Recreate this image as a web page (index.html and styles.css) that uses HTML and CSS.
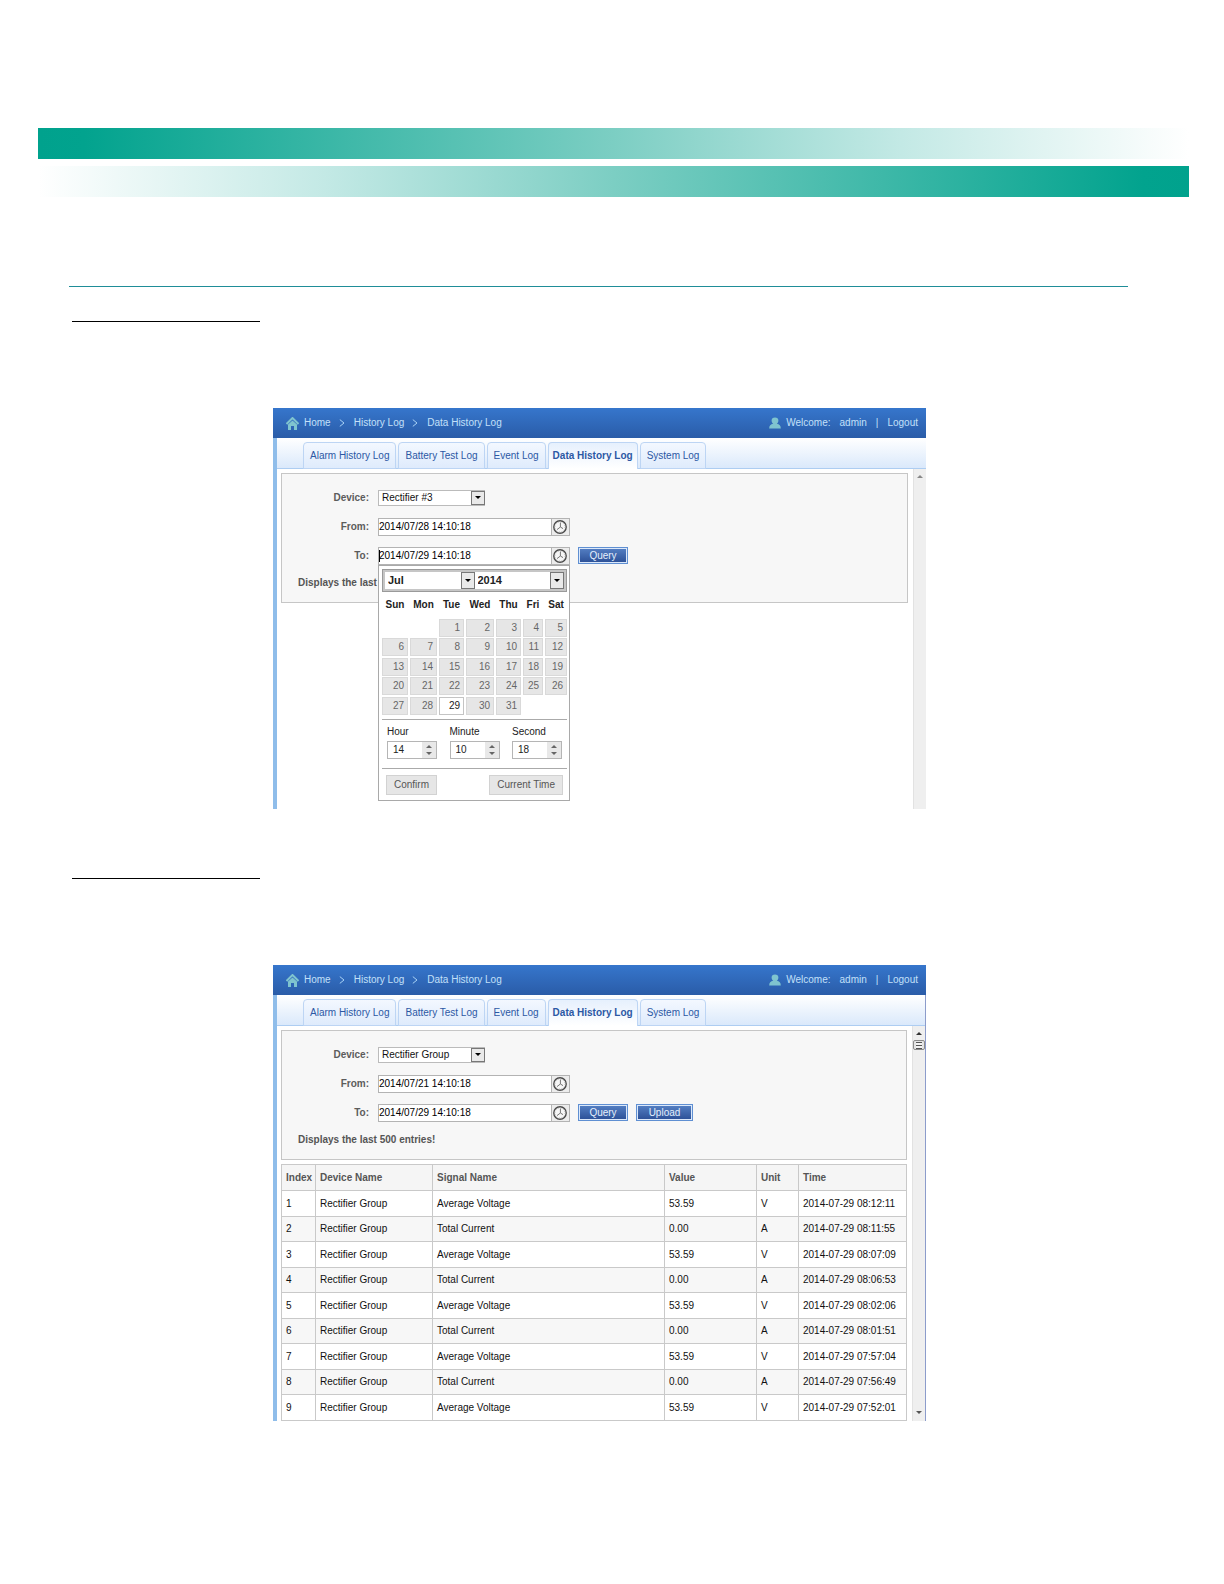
FILE: index.html
```
<!DOCTYPE html>
<html lang="en">
<head>
  <meta charset="utf-8">
  <title>Data History Log</title>
  <link rel="stylesheet" href="styles.css">
</head>
<body>
  <!-- shared icons -->
  <svg class="sprite" aria-hidden="true">
    <symbol id="icon-home" viewBox="0 0 13 13">
      <path d="M0.5 7 L6.5 1 L12.5 7" fill="none" stroke="#7fc4cf" stroke-width="2"/>
      <path d="M2 7.6 L6.5 3.4 L11 7.6 V13 H8 V9 H5 V13 H2 Z" fill="#7fc4cf"/>
    </symbol>
    <symbol id="icon-user" viewBox="0 0 12 12">
      <path d="M6 0.5 C8.2 0.5 9.4 1.8 9.4 3.6 C9.4 5 8.6 6.2 7.8 6.8 C10.4 7.2 11.8 8.6 11.8 11.5 H0.2 C0.2 8.6 1.6 7.2 4.2 6.8 C3.4 6.2 2.6 5 2.6 3.6 C2.6 1.8 3.8 0.5 6 0.5 Z" fill="#7fc4cf"/>
    </symbol>
    <symbol id="icon-next" viewBox="0 0 6 8">
      <path d="M0.8 0.6 L5 4 L0.8 7.4" fill="none" stroke="#a9d2f5" stroke-width="1"/>
    </symbol>
    <symbol id="icon-clock" viewBox="0 0 16 16">
      <circle cx="8" cy="8" r="6.2" fill="#f6f6f6" stroke="#4a4a4a" stroke-width="1.4"/>
      <circle cx="8" cy="8" r="5" fill="none" stroke="#b5b5b5" stroke-width="1" stroke-dasharray="1 1.6"/>
      <path d="M8.4 3.6 V8 L5 10.6 M8.4 8 L11 9.6" fill="none" stroke="#777" stroke-width="1"/>
    </symbol>
  </svg>

  <header class="bands">
    <div class="band band-left"></div>
    <div class="band band-right"></div>
  </header>
  <hr class="rule">

  <section class="step">
    <hr class="underline">
    <div class="panel">
      <div class="topbar">
        <svg class="home-icon"><use href="#icon-home"/></svg>
        <nav class="crumbs">
          <a href="#">Home</a>
          <svg class="next-icon"><use href="#icon-next"/></svg>
          <a href="#">History Log</a>
          <svg class="next-icon"><use href="#icon-next"/></svg>
          <a href="#">Data History Log</a>
        </nav>
        <div class="account">
          <svg class="user-icon"><use href="#icon-user"/></svg>
          <span>Welcome:</span>
          <span>admin</span>
          <span>|</span>
          <a href="#">Logout</a>
        </div>
      </div>
      <nav class="tabs">
        <a class="tab" href="#">Alarm History Log</a>
        <a class="tab" href="#">Battery Test Log</a>
        <a class="tab" href="#">Event Log</a>
        <a class="tab active" href="#">Data History Log</a>
        <a class="tab" href="#">System Log</a>
      </nav>
      <div class="view">
        <div class="content content-tall">
          <form class="filter">
            <div class="row">
              <label for="device1">Device:</label>
              <div class="select select-device">
                <select id="device1"><option>Rectifier #3</option></select>
                <span class="arrow"></span>
              </div>
            </div>
            <div class="row">
              <label for="from1">From:</label>
              <div class="date">
                <input id="from1" type="text" value="2014/07/28 14:10:18">
                <button type="button" class="clock" aria-label="Pick start"><svg><use href="#icon-clock"/></svg></button>
              </div>
            </div>
            <div class="row">
              <label for="to1">To:</label>
              <div class="date">
                <input id="to1" class="caret" type="text" value="2014/07/29 14:10:18">
                <button type="button" class="clock" aria-label="Pick end"><svg><use href="#icon-clock"/></svg></button>

                <div class="picker">
                  <div class="picker-bar">
                    <div class="select">
                      <select aria-label="Month"><option>Jul</option></select>
                      <span class="arrow"></span>
                    </div>
                    <div class="select">
                      <select aria-label="Year"><option>2014</option></select>
                      <span class="arrow"></span>
                    </div>
                  </div>
                  <table class="days">
                    <colgroup>
                      <col class="d-sun"><col class="d-mon"><col class="d-tue"><col class="d-wed"><col class="d-thu"><col class="d-fri"><col class="d-sat">
                    </colgroup>
                    <thead>
                      <tr><th>Sun</th><th>Mon</th><th>Tue</th><th>Wed</th><th>Thu</th><th>Fri</th><th>Sat</th></tr>
                    </thead>
                    <tbody>
                      <tr><td></td><td></td><td><button type="button">1</button></td><td><button type="button">2</button></td><td><button type="button">3</button></td><td><button type="button">4</button></td><td><button type="button">5</button></td></tr>
                      <tr><td><button type="button">6</button></td><td><button type="button">7</button></td><td><button type="button">8</button></td><td><button type="button">9</button></td><td><button type="button">10</button></td><td><button type="button">11</button></td><td><button type="button">12</button></td></tr>
                      <tr><td><button type="button">13</button></td><td><button type="button">14</button></td><td><button type="button">15</button></td><td><button type="button">16</button></td><td><button type="button">17</button></td><td><button type="button">18</button></td><td><button type="button">19</button></td></tr>
                      <tr><td><button type="button">20</button></td><td><button type="button">21</button></td><td><button type="button">22</button></td><td><button type="button">23</button></td><td><button type="button">24</button></td><td><button type="button">25</button></td><td><button type="button">26</button></td></tr>
                      <tr><td><button type="button">27</button></td><td><button type="button">28</button></td><td><button type="button" class="today">29</button></td><td><button type="button">30</button></td><td><button type="button">31</button></td><td></td><td></td></tr>
                    </tbody>
                  </table>
                  <div class="time">
                    <div class="unit">
                      <label for="hour">Hour</label>
                      <div class="spin"><input id="hour" type="number" value="14"><span class="spin-arrows"></span></div>
                    </div>
                    <div class="unit">
                      <label for="minute">Minute</label>
                      <div class="spin"><input id="minute" type="number" value="10"><span class="spin-arrows"></span></div>
                    </div>
                    <div class="unit">
                      <label for="second">Second</label>
                      <div class="spin"><input id="second" type="number" value="18"><span class="spin-arrows"></span></div>
                    </div>
                  </div>
                  <div class="picker-actions">
                    <button type="button">Confirm</button>
                    <button type="button">Current Time</button>
                  </div>
                </div>
              </div>
              <button type="button" class="btn">Query</button>
            </div>
            <p class="note">Displays the last 500 entries!</p>
          </form>
        </div>
        <div class="scrollbar disabled">
          <span class="up"></span>
        </div>
      </div>
    </div>
  </section>

  <section class="step">
    <hr class="underline">
    <div class="panel panel-edge">
      <div class="topbar">
        <svg class="home-icon"><use href="#icon-home"/></svg>
        <nav class="crumbs">
          <a href="#">Home</a>
          <svg class="next-icon"><use href="#icon-next"/></svg>
          <a href="#">History Log</a>
          <svg class="next-icon"><use href="#icon-next"/></svg>
          <a href="#">Data History Log</a>
        </nav>
        <div class="account">
          <svg class="user-icon"><use href="#icon-user"/></svg>
          <span>Welcome:</span>
          <span>admin</span>
          <span>|</span>
          <a href="#">Logout</a>
        </div>
      </div>
      <nav class="tabs">
        <a class="tab" href="#">Alarm History Log</a>
        <a class="tab" href="#">Battery Test Log</a>
        <a class="tab" href="#">Event Log</a>
        <a class="tab active" href="#">Data History Log</a>
        <a class="tab" href="#">System Log</a>
      </nav>
      <div class="view">
        <div class="content">
          <form class="filter">
            <div class="row">
              <label for="device2">Device:</label>
              <div class="select select-device">
                <select id="device2"><option>Rectifier Group</option></select>
                <span class="arrow"></span>
              </div>
            </div>
            <div class="row">
              <label for="from2">From:</label>
              <div class="date">
                <input id="from2" type="text" value="2014/07/21 14:10:18">
                <button type="button" class="clock" aria-label="Pick start"><svg><use href="#icon-clock"/></svg></button>
              </div>
            </div>
            <div class="row">
              <label for="to2">To:</label>
              <div class="date">
                <input id="to2" type="text" value="2014/07/29 14:10:18">
                <button type="button" class="clock" aria-label="Pick end"><svg><use href="#icon-clock"/></svg></button>
              </div>
              <button type="button" class="btn">Query</button>
              <button type="button" class="btn btn-wide">Upload</button>
            </div>
            <p class="note">Displays the last 500 entries!</p>
          </form>
          <table class="log">
            <colgroup>
              <col class="c-index"><col class="c-device"><col><col class="c-value"><col class="c-unit"><col class="c-time">
            </colgroup>
            <thead>
              <tr><th>Index</th><th>Device Name</th><th>Signal Name</th><th>Value</th><th>Unit</th><th>Time</th></tr>
            </thead>
            <tbody>
              <tr><td>1</td><td>Rectifier Group</td><td>Average Voltage</td><td>53.59</td><td>V</td><td>2014-07-29 08:12:11</td></tr>
              <tr><td>2</td><td>Rectifier Group</td><td>Total Current</td><td>0.00</td><td>A</td><td>2014-07-29 08:11:55</td></tr>
              <tr><td>3</td><td>Rectifier Group</td><td>Average Voltage</td><td>53.59</td><td>V</td><td>2014-07-29 08:07:09</td></tr>
              <tr><td>4</td><td>Rectifier Group</td><td>Total Current</td><td>0.00</td><td>A</td><td>2014-07-29 08:06:53</td></tr>
              <tr><td>5</td><td>Rectifier Group</td><td>Average Voltage</td><td>53.59</td><td>V</td><td>2014-07-29 08:02:06</td></tr>
              <tr><td>6</td><td>Rectifier Group</td><td>Total Current</td><td>0.00</td><td>A</td><td>2014-07-29 08:01:51</td></tr>
              <tr><td>7</td><td>Rectifier Group</td><td>Average Voltage</td><td>53.59</td><td>V</td><td>2014-07-29 07:57:04</td></tr>
              <tr><td>8</td><td>Rectifier Group</td><td>Total Current</td><td>0.00</td><td>A</td><td>2014-07-29 07:56:49</td></tr>
              <tr><td>9</td><td>Rectifier Group</td><td>Average Voltage</td><td>53.59</td><td>V</td><td>2014-07-29 07:52:01</td></tr>
            </tbody>
          </table>
        </div>
        <div class="scrollbar">
          <span class="up"></span>
          <span class="thumb"></span>
          <span class="down"></span>
        </div>
      </div>
    </div>
  </section>
</body>
</html>
```
FILE: styles.css
```
* {
  box-sizing: border-box;
}
body {
  margin: 0;
  padding: 128px 0 160px;
  background: #fff;
  font-family: "Liberation Sans", Arial, sans-serif;
  font-size: 10px;
  line-height: 12px;
  color: #222;
}
a {
  color: inherit;
  text-decoration: none;
}
hr, p {
  margin: 0;
  border: 0;
}
input, select, button {
  margin: 0;
  padding: 0;
  border: 0;
  border-radius: 0;
  background: none;
  font: inherit;
  color: inherit;
  appearance: none;
}
.sprite {
  display: none;
}

/* page header */
.bands {
  display: flex;
  flex-direction: column;
  gap: 7px;
  margin: 0 35px 0 38px;
}
.band {
  height: 31px;
}
.band-left {
  background: linear-gradient(to right, #00a28d, #02a38e 4%, #7ccec3 50%, #c3e9e5 75%, #fff);
}
.band-right {
  background: linear-gradient(to left, #00a28d, #02a38e 4%, #7ccec3 50%, #c3e9e5 75%, #fff);
}
.rule {
  height: 1px;
  margin: 89px 96px 0 69px;
  background: #1f8d98;
}
.step {
  margin: 0 298px 0 273px;
  padding-top: 34px;
}
.step + .step {
  padding-top: 69px;
}
.underline {
  width: 188px;
  height: 1px;
  margin: 0 0 86px -201px;
  background: #000;
}

/* panel */
.topbar {
  display: flex;
  align-items: center;
  height: 30px;
  padding: 0 8px 0 13px;
  background: linear-gradient(#3676cc, #2a5ca8);
  color: #c3e0f9;
}
.home-icon {
  width: 13px;
  height: 13px;
  margin-right: 5px;
}
.crumbs {
  display: flex;
  align-items: center;
  flex: 1;
}
.next-icon {
  width: 6px;
  height: 8px;
  margin: 0 9px 0 8px;
}
.account {
  display: flex;
  align-items: center;
  gap: 9px;
}
.user-icon {
  width: 12px;
  height: 12px;
  margin-right: -4px;
}
.tabs {
  display: flex;
  align-items: flex-end;
  gap: 2px;
  height: 31px;
  padding-left: 26px;
  border-left: 4px solid #8fbdea;
  background: linear-gradient(#fff, #d9e8fb);
  box-shadow: inset 0 -1px #adcdf2;
}
.tab {
  height: 27px;
  padding: 0 6px;
  border: 1px solid #bdd5f4;
  border-radius: 4px 4px 0 0;
  background: linear-gradient(#f3f8ff, #dfebfc);
  line-height: 25px;
  color: #2c58a4;
  white-space: nowrap;
}
.tab.active {
  padding: 0 4px;
  border-bottom: 0;
  background: linear-gradient(#e6f0fd, #fff);
  font-weight: bold;
}
.view {
  display: flex;
  border-left: 4px solid #8fbdea;
}
.panel-edge .tabs,
.panel-edge .view {
  border-right: 1px solid #8c9ccb;
}
.content {
  flex: 1;
  padding: 4px 5px 0 4px;
}
.content-tall {
  min-height: 340px;
}
.scrollbar {
  display: flex;
  flex-direction: column;
  align-items: center;
  width: 13px;
  padding-top: 6px;
  border-left: 1px solid #e2e2e2;
  background: #efefef;
}
.up {
  border: 3px solid transparent;
  border-top: 0;
  border-bottom-color: #333;
}
.down {
  margin: auto 0 7px;
  border: 3px solid transparent;
  border-bottom: 0;
  border-top-color: #555;
}
.disabled .up {
  border-bottom-color: #888;
}
.thumb {
  width: 12px;
  height: 10px;
  margin-top: 5px;
  border: 1px solid #8c8c8c;
  border-radius: 2px;
  background: repeating-linear-gradient(#555 0 1px, #f3f3f3 1px 3px) center / 6px 7px no-repeat #e4e4e4;
}

/* filter form */
.filter {
  padding: 9px 16px 6px 0;
  border: 1px solid #c6c6c6;
  background: #f7f7f7;
}
.row {
  display: flex;
  align-items: center;
  height: 29px;
}
.row > label {
  width: 87px;
  margin-right: 9px;
  text-align: right;
  font-weight: bold;
  color: #5c5c5c;
}
.note {
  padding-left: 16px;
  font-weight: bold;
  line-height: 26px;
  color: #555;
}
.select {
  display: grid;
  grid-template-columns: 1fr 14px;
  background: #fff;
}
.select select {
  grid-area: 1 / 1 / 2 / 3;
  width: 100%;
  padding-left: 3px;
}
.arrow {
  grid-area: 1 / 2;
  display: flex;
  align-items: center;
  justify-content: center;
  border: 1px solid #777;
  background: #e9e9e9;
  pointer-events: none;
}
.arrow::after {
  content: "";
  border: 3px solid transparent;
  border-bottom: 0;
  border-top-color: #000;
}
.select-device {
  width: 107px;
  height: 16px;
  border: 1px solid #bbb;
  border-right: 0;
  color: #111;
}
.date {
  position: relative;
  display: flex;
  width: 192px;
  height: 18px;
  border: 1px solid #b3b3b3;
  background: #fff;
  color: #000;
}
.date > input {
  flex: 1;
  min-width: 0;
}
.date > .caret {
  background: linear-gradient(#000, #000) left center / 1px 12px no-repeat;
}
.clock {
  width: 18px;
  border-left: 1px solid #b3b3b3;
  background: #ececec;
}
.clock svg {
  display: block;
  width: 16px;
  height: 16px;
}
.btn {
  width: 50px;
  height: 17px;
  margin-left: 8px;
  border: 1px solid #5f8fd2;
  box-shadow: inset 0 0 0 1px #dbe8fa;
  background: linear-gradient(#5580c4, #2b4f96);
  color: #e4effc;
}
.btn-wide {
  width: 57px;
}

/* calendar popup */
.picker {
  position: absolute;
  top: 17px;
  left: -1px;
  z-index: 1;
  width: 192px;
  padding: 3px 2px 3px 3px;
  border: 1px solid #a9a9a9;
  background: #fff;
  color: #222;
}
.picker-bar {
  display: flex;
  height: 23px;
  padding: 2px;
  border: 1px solid #9a9a9a;
  background: #c6c6c6;
}
.picker-bar .select {
  flex: 1;
  font-size: 11px;
  font-weight: bold;
}
.days {
  width: calc(100% + 4px);
  margin: 0 -2px;
  border-spacing: 2px 1px;
  table-layout: fixed;
}
.d-sun { width: 26px; }
.d-mon { width: 27px; }
.d-tue { width: 25px; }
.d-wed { width: 28px; }
.d-thu { width: 25px; }
.d-fri { width: 20px; }
.days th {
  height: 25px;
  padding: 0;
  text-align: center;
}
.days td {
  height: 18px;
  padding: 0;
}
.days tr:nth-child(even) td {
  height: 19px;
}
.days button {
  display: block;
  width: 100%;
  height: 18px;
  padding-right: 3px;
  border: 1px solid #d9d9d9;
  background: #e6e6e6;
  text-align: right;
  color: #666;
}
.days .today {
  border-color: #c4c4c4;
  background: #fff;
  color: #222;
}
.time {
  display: flex;
  justify-content: space-between;
  margin-top: 3px;
  padding: 6px 5px 9px;
  border: 1px solid #aaa;
  border-width: 1px 0;
}
.unit {
  width: 50px;
}
.unit label {
  display: block;
  margin-bottom: 3px;
}
.spin {
  display: flex;
  height: 18px;
  border: 1px solid #b5b5b5;
}
.spin input {
  flex: 1;
  min-width: 0;
  padding-left: 5px;
  appearance: textfield;
}
.spin-arrows {
  display: flex;
  flex-direction: column;
  align-items: center;
  justify-content: center;
  gap: 4px;
  width: 14px;
  background: #e8e8e8;
}
.spin-arrows::before,
.spin-arrows::after {
  content: "";
  border: 3px solid transparent;
}
.spin-arrows::before {
  border-top: 0;
  border-bottom-color: #666;
}
.spin-arrows::after {
  border-bottom: 0;
  border-top-color: #666;
}
.picker-actions {
  display: flex;
  justify-content: space-between;
  padding: 6px 4px 2px;
}
.picker-actions button {
  height: 20px;
  padding: 0 7px;
  border: 1px solid #d2d2d2;
  background: #e6e6e6;
  color: #555;
}

/* log table */
.log {
  width: 100%;
  margin-top: 4px;
  border-collapse: collapse;
  table-layout: fixed;
}
.c-index { width: 34px; }
.c-device { width: 117px; }
.c-value { width: 92px; }
.c-unit { width: 42px; }
.c-time { width: 108px; }
.log th,
.log td {
  height: 26px;
  padding: 0 0 0 4px;
  border: 1px solid #c9c9c9;
  text-align: left;
  white-space: nowrap;
}
.log th {
  background: #f5f5f5;
  color: #555;
}
.log td {
  color: #111;
}
.log tbody tr:nth-child(even) td {
  height: 25px;
  background: #f7f7f7;
}
```
